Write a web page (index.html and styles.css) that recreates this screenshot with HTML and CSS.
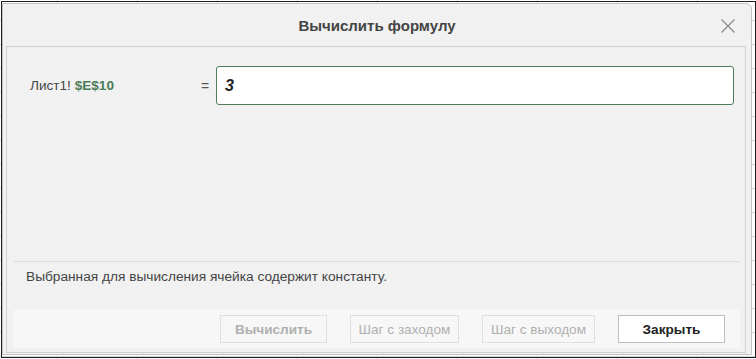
FILE: index.html
```html
<!DOCTYPE html>
<html lang="ru">
<head>
<meta charset="utf-8">
<title>Вычислить формулу</title>
<link rel="stylesheet" href="styles.css">
</head>
<body>
<div class="screen">
  <div class="sheet"></div>
  <div class="dialog">
    <div class="dlg-head">
      <span class="dlg-title">Вычислить формулу</span>
      <span class="dlg-close" aria-label="Закрыть">
        <svg width="16" height="16" viewBox="0 0 16 16"><path d="M1.5 1.5 L14.5 14.5 M14.5 1.5 L1.5 14.5" stroke="#8a8a8a" stroke-width="1.2" fill="none"/></svg>
      </span>
    </div>
    <div class="dlg-body">
      <div class="ref-row">
        <div class="ref-label">Лист1! <span class="ref-cell">$E$10</span></div>
        <div class="ref-eq">=</div>
        <div class="formula">3</div>
      </div>
      <div class="spacer"></div>
      <div class="msg">Выбранная для вычисления ячейка содержит константу.</div>
      <div class="footer">
        <span class="btn btn-disabled btn-bold btn-calc">Вычислить</span>
        <span class="btn btn-disabled btn-in">Шаг с заходом</span>
        <span class="btn btn-disabled btn-out">Шаг с выходом</span>
        <span class="btn btn-primary btn-bold btn-close">Закрыть</span>
      </div>
    </div>
  </div>
</div>
</body>
</html>
```

FILE: styles.css
```css
html, body {
  margin: 0;
  padding: 0;
  background: #ffffff;
}
body {
  font-family: "Liberation Sans", Arial, sans-serif;
}
.screen {
  position: relative;
  width: 756px;
  height: 359px;
  overflow: hidden;
  background-color: #ffffff;
  background-image:
    repeating-linear-gradient(to right, transparent 0, transparent 57px, #d6d6d6 57px, #d6d6d6 58px, transparent 58px, transparent 80px),
    repeating-linear-gradient(to bottom, transparent 0, transparent 20px, #d6d6d6 20px, #d6d6d6 21px, transparent 21px, transparent 24px);
}
.sheet {
  position: absolute;
  left: 1px;
  top: 1px;
  width: 755px;
  height: 357px;
  box-sizing: border-box;
  border: 1px solid #1e1e1e;
}
.dialog {
  position: absolute;
  left: 2px;
  top: 3px;
  width: 750px;
  height: 352px;
  box-sizing: border-box;
  border: 1px solid #c4c4c4;
  border-radius: 0 6px 0 0;
  background: #f1f1f1;
  display: flex;
  flex-direction: column;
}
.dlg-head {
  height: 42px;
  flex: none;
  display: flex;
  align-items: center;
  justify-content: center;
  position: relative;
}
.dlg-title {
  font-size: 15px;
  font-weight: bold;
  color: #444444;
  padding-top: 1px;
}
.dlg-close {
  position: absolute;
  right: 15px;
  top: 14px;
  width: 16px;
  height: 16px;
  display: block;
}
.dlg-close svg {
  display: block;
}
.dlg-body {
  flex: 1;
  margin: 0 5px 1px 3px;
  border: 1px solid #cfcfcf;
  display: flex;
  flex-direction: column;
}
.ref-row {
  display: flex;
  align-items: center;
  padding: 19px 11px 0 23px;
}
.ref-label {
  width: 171px;
  font-size: 13.6px;
  color: #444444;
}
.ref-cell {
  font-weight: bold;
  color: #4a7d57;
}
.ref-eq {
  width: 15px;
  font-size: 14px;
  color: #555555;
}
.formula {
  flex: 1;
  height: 39px;
  box-sizing: border-box;
  border: 1px solid #4e7c5c;
  border-radius: 3px;
  background: #ffffff;
  padding: 0 0 0 8px;
  display: flex;
  align-items: center;
  font-size: 16px;
  font-weight: bold;
  font-style: italic;
  color: #222222;
}
.spacer {
  flex: 1;
}
.msg {
  height: 49px;
  margin: 0 5px 0 7px;
  border-top: 1px solid #dcdcdc;
  padding: 7px 0 0 12px;
  box-sizing: border-box;
  font-size: 13.7px;
  line-height: 16px;
  color: #444444;
}
.footer {
  height: 38px;
  margin: 0 5px 4px 7px;
  background: #f7f7f7;
  box-sizing: border-box;
  padding: 5px 15px 0 0;
  display: flex;
  justify-content: flex-end;
  align-items: flex-start;
  gap: 23px;
}
.btn {
  height: 28px;
  box-sizing: border-box;
  padding: 0;
  display: flex;
  align-items: center;
  justify-content: center;
  font-size: 13.6px;
  white-space: nowrap;
}
.btn-calc { width: 107px; }
.btn-in { width: 109px; }
.btn-out { width: 113px; }
.btn-close { width: 107px; }
.btn-bold {
  font-weight: bold;
}
.btn-disabled {
  border: 1px solid #e0e0e0;
  color: #b0b0b0;
  background: #f7f7f7;
}
.btn-primary {
  border: 1px solid #bdbdbd;
  background: #ffffff;
  color: #222222;
}
```
